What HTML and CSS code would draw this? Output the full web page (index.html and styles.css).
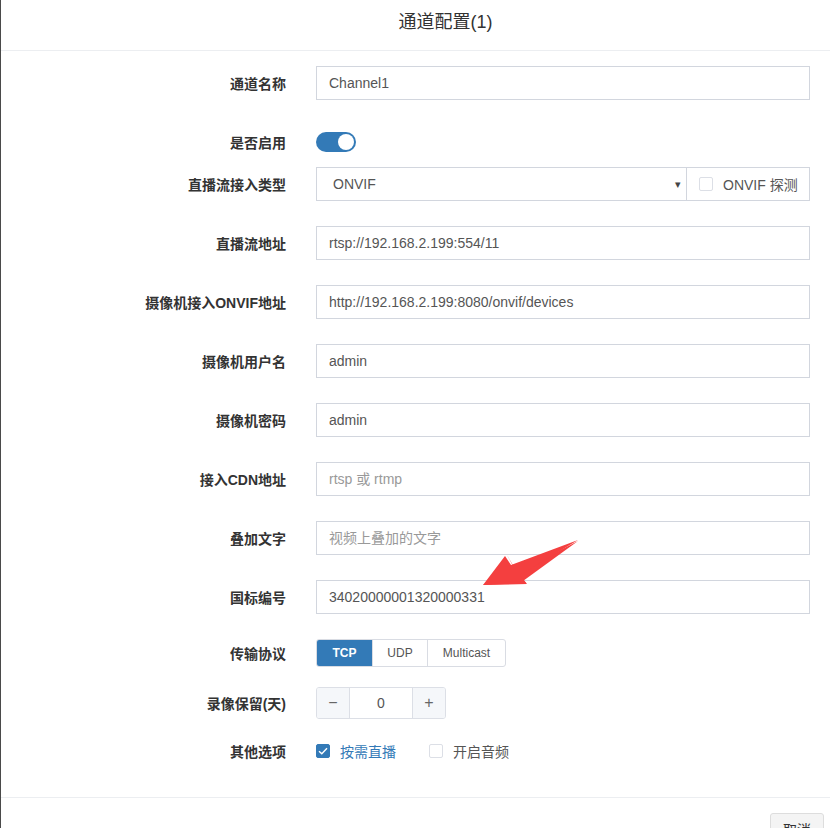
FILE: index.html
```html
<!DOCTYPE html>
<html lang="zh-CN">
<head>
<meta charset="utf-8">
<title>通道配置</title>
<link rel="stylesheet" href="styles.css">
</head>
<body>
<div class="modal">
  <div class="modal-header"><h4 class="title">通道配置(1)</h4></div>
  <div class="modal-body">
    <div class="row r-first">
      <label class="lbl">通道名称</label>
      <div class="ctl"><input class="inp" value="Channel1"></div>
    </div>
    <div class="row r-toggle">
      <label class="lbl">是否启用</label>
      <div class="ctl"><span class="switch"><span class="knob"></span></span></div>
    </div>
    <div class="row r-select">
      <label class="lbl">直播流接入类型</label>
      <div class="ctl group">
        <div class="select">ONVIF<span class="caret">▾</span></div>
        <div class="addon"><span class="cb"></span><span class="addon-text">ONVIF 探测</span></div>
      </div>
    </div>
    <div class="row">
      <label class="lbl">直播流地址</label>
      <div class="ctl"><input class="inp" value="rtsp://192.168.2.199:554/11"></div>
    </div>
    <div class="row">
      <label class="lbl">摄像机接入ONVIF地址</label>
      <div class="ctl"><input class="inp" value="http://192.168.2.199:8080/onvif/devices"></div>
    </div>
    <div class="row">
      <label class="lbl">摄像机用户名</label>
      <div class="ctl"><input class="inp" value="admin"></div>
    </div>
    <div class="row">
      <label class="lbl">摄像机密码</label>
      <div class="ctl"><input class="inp" value="admin"></div>
    </div>
    <div class="row">
      <label class="lbl">接入CDN地址</label>
      <div class="ctl"><input class="inp" placeholder="rtsp 或 rtmp"></div>
    </div>
    <div class="row">
      <label class="lbl">叠加文字</label>
      <div class="ctl"><input class="inp" placeholder="视频上叠加的文字"></div>
    </div>
    <div class="row">
      <label class="lbl">国标编号</label>
      <div class="ctl"><input class="inp" value="34020000001320000331"></div>
    </div>
    <div class="row r-proto">
      <label class="lbl">传输协议</label>
      <div class="ctl">
        <div class="btn-group">
          <span class="bg-btn active">TCP</span><span class="bg-btn">UDP</span><span class="bg-btn wide">Multicast</span>
        </div>
      </div>
    </div>
    <div class="row r-step">
      <label class="lbl">录像保留(天)</label>
      <div class="ctl">
        <div class="stepper"><span class="st-btn">−</span><span class="st-val">0</span><span class="st-btn">+</span></div>
      </div>
    </div>
    <div class="row r-opts">
      <label class="lbl">其他选项</label>
      <div class="ctl opts">
        <span class="opt on"><span class="cb checked"><svg width="10" height="8" viewBox="0 0 10 8"><path d="M1 4.2 L3.8 6.8 L9 1.2" fill="none" stroke="#fff" stroke-width="1.4"/></svg></span>按需直播</span>
        <span class="opt"><span class="cb"></span>开启音频</span>
      </div>
    </div>
  </div>
  <div class="modal-footer"><span class="btn-cancel">取消</span></div>
  <svg class="arrow" width="110" height="60" viewBox="0 0 110 60">
    <path d="M95 2 L35 33 L40 42 Z M0 46 L24 16 L30 27 Z M0 46 L43 44 L34 33 L24 16 Z" fill="#f43f3f"/>
    <path d="M95 1 L28 26 L22 17 L0 46 L44 45 L37 36 Z" fill="#f43f3f"/>
  </svg>
</div>
</body>
</html>
```

FILE: styles.css
```css
* { box-sizing: border-box; }
html, body { margin: 0; padding: 0; background: #fff; }
body {
  font-family: "Liberation Sans", "Noto Sans CJK SC", sans-serif;
  font-size: 14px;
  color: #555;
}
.modal {
  position: relative;
  width: 830px;
  height: 828px;
  border-left: 1px solid #4a4a4a;
  overflow: hidden;
}
.modal-header {
  height: 51px;
  border-bottom: 1px solid #eceef1;
  padding-left: 60px;
  text-align: center;
}
.title {
  margin: 0;
  padding-top: 10px;
  font-size: 18px;
  font-weight: normal;
  color: #333;
  line-height: 24px;
}
.modal-body {
  padding: 15px 20px 0 0;
  height: 746px;
}
.row {
  display: flex;
  align-items: center;
  height: 34px;
  margin-top: 25px;
}
.row.r-first { margin-top: 0; }
.row.r-select { margin-top: 8px; }
.row.r-proto { height: 28px; margin-top: 25px; }
.row.r-step { height: 32px; margin-top: 20px; }
.row.r-opts { height: 20px; margin-top: 22px; }
.lbl {
  width: 285px;
  flex: none;
  text-align: right;
  font-weight: bold;
  color: #333;
  font-size: 14px;
}
.ctl {
  flex: 1;
  margin-left: 30px;
  display: flex;
  align-items: center;
}
.inp {
  width: 100%;
  height: 34px;
  border: 1px solid #d2d6de;
  border-radius: 0;
  padding: 0 12px;
  font: inherit;
  font-size: 14px;
  color: #555;
  outline: none;
  background: #fff;
}
.inp::placeholder { color: #999; }
.switch {
  position: relative;
  display: inline-block;
  width: 40px;
  height: 20px;
  border-radius: 10px;
  background: #337ab7;
}
.knob {
  position: absolute;
  right: 2px;
  top: 2px;
  width: 16px;
  height: 16px;
  border-radius: 50%;
  background: #fff;
}
.group { height: 34px; }
.select {
  position: relative;
  flex: 1;
  height: 34px;
  border: 1px solid #d2d6de;
  border-right: none;
  line-height: 32px;
  padding-left: 16px;
  color: #555;
}
.caret {
  position: absolute;
  right: 5px;
  top: 0;
  font-size: 11px;
  color: #444;
}
.addon {
  width: 124px;
  height: 34px;
  border: 1px solid #d2d6de;
  display: flex;
  align-items: center;
  padding-left: 12px;
}
.addon-text { margin-left: 10px; color: #555; }
.cb {
  display: inline-flex;
  align-items: center;
  justify-content: center;
  width: 14px;
  height: 14px;
  border: 1px solid #dcdfe6;
  border-radius: 2px;
  background: #fff;
  flex: none;
}
.cb.checked { background: #337ab7; border-color: #337ab7; }
.btn-group {
  display: flex;
  height: 28px;
  border: 1px solid #d9dce3;
  border-radius: 3px;
  overflow: hidden;
}
.bg-btn {
  width: 55px;
  text-align: center;
  line-height: 26px;
  font-size: 12px;
  color: #555;
  border-left: 1px solid #d9dce3;
}
.bg-btn:first-child { border-left: none; }
.bg-btn.active {
  width: 55px;
  background: #337ab7;
  color: #fff;
  font-weight: bold;
}
.bg-btn.wide { width: 78px; }
.stepper {
  display: flex;
  width: 130px;
  height: 32px;
  border: 1px solid #dcdfe6;
  border-radius: 3px;
  overflow: hidden;
}
.st-btn {
  width: 32px;
  text-align: center;
  line-height: 30px;
  background: #f5f7fa;
  color: #666;
  font-size: 16px;
}
.st-val {
  flex: 1;
  text-align: center;
  line-height: 30px;
  border-left: 1px solid #dcdfe6;
  border-right: 1px solid #dcdfe6;
  color: #555;
}
.opts { gap: 0; }
.opt {
  display: inline-flex;
  align-items: center;
  color: #555;
}
.opt .cb { margin-right: 10px; }
.opt.on { color: #337ab7; margin-right: 33px; }
.modal-footer {
  border-top: 1px solid #eceef1;
  padding: 15px 6px 0 0;
  display: flex;
  justify-content: flex-end;
}
.btn-cancel {
  width: 54px;
  height: 34px;
  border: 1px solid #ddd;
  border-radius: 3px;
  background: #f4f4f4;
  text-align: center;
  line-height: 32px;
  color: #333;
}
.arrow {
  position: absolute;
  left: 482px;
  top: 539px;
}
```
